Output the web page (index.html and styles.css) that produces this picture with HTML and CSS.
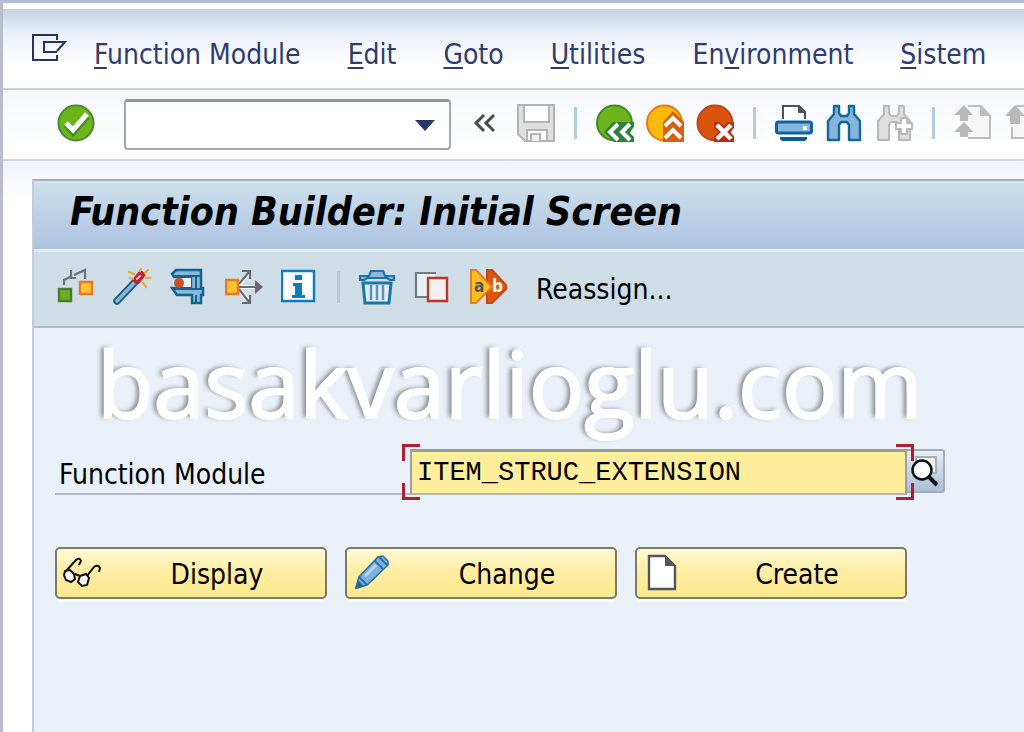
FILE: index.html
```html
<!DOCTYPE html>
<html lang="en">
<head>
<meta charset="utf-8">
<title>Function Builder: Initial Screen</title>
<link rel="stylesheet" href="styles.css">
</head>
<body>
<div class="window">
  <nav class="menubar">
    <button class="icon-button system-menu" aria-label="System menu">
      <svg class="icon" viewBox="0 0 38 38" fill="none" stroke="#26345f" stroke-width="2"><path d="M27 10V5H3v25h24v-5M27 21l8-9H14v10h13"/></svg>
    </button>
    <a class="menu" href="#"><u>F</u>unction Module</a>
    <a class="menu" href="#"><u>E</u>dit</a>
    <a class="menu" href="#"><u>G</u>oto</a>
    <a class="menu" href="#"><u>U</u>tilities</a>
    <a class="menu" href="#">En<u>v</u>ironment</a>
    <a class="menu" href="#"><u>S</u>istem</a>
  </nav>

  <div class="toolbar">
    <button class="icon-button" aria-label="Enter">
      <svg class="icon" viewBox="0 0 38 38"><circle cx="19" cy="19" r="17.5" fill="#6db41a" stroke="#468a35" stroke-width="2"/><path d="M9 20l7 8 14-16" fill="none" stroke="#3f8b20" stroke-width="7"/><path d="M9 19l7 7 14-16" fill="none" stroke="#fff" stroke-width="5"/></svg>
    </button>
    <div class="combo">
      <input class="combo-input" type="text" aria-label="Command field">
      <button class="combo-arrow" aria-label="Show command history"><svg class="arrow" viewBox="0 0 20 12"><path d="M0 1h20L10 12z" fill="#25386b"/></svg></button>
    </div>
    <button class="icon-button narrow" aria-label="Close command field">
      <svg class="icon-narrow" viewBox="0 0 22 38" fill="none" stroke="#4b4b4b" stroke-width="3"><path d="M11 11L3 19l8 8M21 11l-8 8 8 8"/></svg>
    </button>
    <button class="icon-button" aria-label="Save" disabled>
      <svg class="icon" viewBox="0 0 38 38" stroke="#b3b3b3" stroke-width="2"><path d="M1 1h36v36H8l-7-7z" fill="#dfdfdf"/><path d="M7 1h25v17H7zM10 37V26h20v11z" fill="#fff"/><path d="M14 37v-7h9v7" fill="#eee"/></svg>
    </button>
    <span class="separator"></span>
    <button class="icon-button" aria-label="Back">
      <svg class="icon" viewBox="0 0 38 38"><circle cx="18.500" cy="19" r="17.500" fill="#6db41a" stroke="#3f8b2c" stroke-width="2"/><path d="M17 18h21v5l-5 5 5 5v5H18L8 28z" fill="#2e8040"/><path d="M22 20l-8 8 8 8M34 20l-8 8 8 8" fill="none" stroke="#fff" stroke-width="4"/></svg>
    </button>
    <button class="icon-button" aria-label="Exit">
      <svg class="icon" viewBox="0 0 38 38"><circle cx="18.500" cy="19" r="17.500" fill="#fdba0c" stroke="#e8791a" stroke-width="2"/><path d="M27 7l11 11v20H17V18z" fill="#dd5d10"/><path d="M19 22l8-8 8 8M19 34l8-8 8 8" fill="none" stroke="#fff" stroke-width="4"/></svg>
    </button>
    <button class="icon-button" aria-label="Cancel">
      <svg class="icon" viewBox="0 0 38 38"><circle cx="19" cy="19" r="17.500" fill="#d9540f" stroke="#c0421d" stroke-width="2"/><path d="M18 18h5l5 4 4-4h6v6l-4 4 4 4v6H18v-6l5-4-5-4z" fill="#b72d16"/><path d="M21 21l14 14M35 21L21 35" stroke="#fff" stroke-width="4.500"/></svg>
    </button>
    <span class="separator"></span>
    <button class="icon-button" aria-label="Print">
      <svg class="icon" viewBox="0 0 38 38"><path d="M8 15V2h16l6 6v7" fill="#fff" stroke="#505050" stroke-width="2"/><path d="M23 2v7h7z" fill="#505050"/><rect x="1.500" y="18" width="35" height="11" rx="2" fill="#88b4db" stroke="#116596" stroke-width="3"/><path d="M28 22h4v4h-4z" fill="#fff"/><path d="M5 33h27v2l-2 2H7l-2-2z" fill="#075d94"/></svg>
    </button>
    <button class="icon-button" aria-label="Find">
      <svg class="icon" viewBox="0 0 38 38" fill="#86b4dc" stroke="#116a92" stroke-width="2.400" stroke-linejoin="round"><path d="M9 2h5v7l2 3h6l2-3V2h5v8l6 7v19H24V21l-2-3h-6l-2 3v15H3V17l6-7z"/></svg>
    </button>
    <button class="icon-button" aria-label="Find next" disabled>
      <svg class="icon" viewBox="0 0 38 38" fill="#dedede" stroke="#b8b8b8" stroke-width="2" stroke-linejoin="round"><path d="M9 2h5v7l2 3h6l2-3V2h5v8l6 7v19H24V21l-2-3h-6l-2 3v15H3V17l6-7z"/><path d="M26 14h6v5h5v6h-5v5h-6v-5h-5v-6h5z" fill="#fff"/></svg>
    </button>
    <span class="separator"></span>
    <button class="icon-button" aria-label="First page" disabled>
      <svg class="icon" viewBox="0 0 38 38"><path d="M14 2h13l9 10v22H14" fill="#f6f6f6" stroke="#bdbdbd" stroke-width="2"/><path d="M26 2v10h10z" fill="#bdbdbd"/><path d="M10 1l9 10h-5v6H6v-6H0zM10 18l9 10h-5v5H6v-5H0z" fill="#b9b9b9"/></svg>
    </button>
    <button class="icon-button" aria-label="Previous page" disabled>
      <svg class="icon" viewBox="0 0 38 38"><path d="M12 2h15l9 10v22H8V23" fill="#f6f6f6" stroke="#bdbdbd" stroke-width="2"/><path d="M11 1l10 11h-5v8H6v-8H1z" fill="#b9b9b9"/></svg>
    </button>
  </div>

  <main class="screen">
    <section class="panel">
      <h1 class="title">Function Builder: Initial Screen</h1>
      <div class="actions">
        <button class="icon-button" aria-label="Other object">
          <svg class="icon" viewBox="0 0 38 38"><path d="M7 17v-5l8-4M14 2v8h5M17 7l11-5v9" fill="none" stroke="#6a7076" stroke-width="2.200"/><path d="M2 21h12v12H2z" fill="#6eae24" stroke="#477b32" stroke-width="2.400"/><path d="M23 14h12v12H23z" fill="#fdc62c" stroke="#e8762b" stroke-width="2.400"/></svg>
        </button>
        <button class="icon-button" aria-label="Activate">
          <svg class="icon" viewBox="0 0 38 38" stroke-linecap="round"><path d="M4 33L24 12" stroke="#17618b" stroke-width="7.500"/><path d="M4 33L23 13" stroke="#8db6d6" stroke-width="3.500"/><path d="M24 12l4-5" stroke="#bf2434" stroke-width="8"/><path d="M24 11l3-3" stroke="#f6bfc0" stroke-width="2"/><path d="M16 4l5 2M28 1l-1 2M35 2l-3 3M33 10h5M30 15l3 4M17 10l3 1" stroke="#f0a52b" stroke-width="2.200"/></svg>
        </button>
        <button class="icon-button" aria-label="Check">
          <svg class="icon" viewBox="0 0 38 38"><path d="M7 2h25v18h2v7h-2v8h-9v-8H8l-5-7h19V9H5L3 6z" fill="#8bb8d6" stroke="#12648e" stroke-width="2.500"/><path d="M14 10h8v9h-8z" fill="#f2f6fa"/><path d="M5 8h26M5 21h28M27 9v11M27 27v8" fill="none" stroke="#12648e" stroke-width="2"/><circle cx="10" cy="15" r="5" fill="#cf4f22"/></svg>
        </button>
        <button class="icon-button" aria-label="Where-used list">
          <svg class="icon" viewBox="0 0 38 38"><path d="M13 18L24 5M13 20l11 13M13 19h17" fill="none" stroke="#fff" stroke-width="4"/><path d="M14 16L24 4M17 3h8v8M14 21l10 13M17 35h8v-8M14 19h18" fill="none" stroke="#666a70" stroke-width="2.200"/><path d="M30 12l8 7-8 7z" fill="#666a70"/><path d="M1 12h12v14H1z" fill="#fdc62c" stroke="#e8762b" stroke-width="2.400"/></svg>
        </button>
        <button class="icon-button" aria-label="Information">
          <svg class="icon" viewBox="0 0 38 38"><path d="M1 3h32v30H1z" fill="#fff" stroke="#087ec1" stroke-width="2.400"/><path d="M14 7h7v5h-7zM12 15h9v12h3v3H11v-3h3v-9h-2z" fill="#087ec1"/></svg>
        </button>
        <span class="separator muted"></span>
        <button class="icon-button" aria-label="Delete">
          <svg class="icon" viewBox="0 0 38 38"><path d="M5 15h28l-2 20H7z" fill="#e3edf5" stroke="#1d75a5" stroke-width="3"/><path d="M13 17v15M19 17v15M25 17v15" stroke="#5b92b7" stroke-width="2.500"/><path d="M2 12V8h9l2-5h12l2 5h9v4h-4l-3-2H9l-3 2z" fill="#8fb9d7" stroke="#1d75a5" stroke-width="2.200"/></svg>
        </button>
        <button class="icon-button" aria-label="Copy">
          <svg class="icon" viewBox="0 0 38 38"><path d="M22 5H2v24h11" fill="#eaf0f5" stroke="#737a82" stroke-width="2.200"/><path d="M14 10h19v23H14z" fill="#f2f2f2" stroke="#b93723" stroke-width="2.400"/></svg>
        </button>
        <button class="icon-button" aria-label="Rename">
          <svg class="icon" viewBox="0 0 38 38"><path d="M17 2h5l14 15v4L22 35h-5z" fill="#dc570d" stroke="#c1481e" stroke-width="2"/><path d="M1 2h5l16 17L6 35H1z" fill="#fdc01f" stroke="#e77929" stroke-width="2"/><text class="glyph" x="4" y="24" fill="#4f5552">a</text><text class="glyph" x="22" y="24" fill="#fff">b</text></svg>
        </button>
        <button class="text-button">Reassign...</button>
      </div>

      <form class="content">
        <p class="watermark">basakvarlioglu.com</p>
        <div class="field-row">
          <label class="field-label" for="module">Function Module</label>
          <div class="field">
            <input class="field-input" id="module" type="text" value="ITEM_STRUC_EXTENSION">
            <span class="focus left"></span>
            <span class="focus right"></span>
          </div>
          <button class="search-help" type="button" aria-label="Search help">
            <svg class="search-icon" viewBox="0 0 36 40"><path d="M9 6h20v16H9z" fill="#f5f7fa" stroke="#a7aeb9" stroke-width="2"/><path d="M21 25l9 9" stroke="#111" stroke-width="4"/><circle cx="15" cy="19" r="9.500" fill="#fff" stroke="#111" stroke-width="2.500"/></svg>
          </button>
        </div>
        <div class="buttons">
          <button class="push" type="button">
            <svg class="icon" viewBox="0 0 38 38" fill="none" stroke="#111" stroke-width="2"><path d="M3 17L13 6q4-3 5 1l-2 4M24 22l7-9q4-3 6 1l-1 4M12 20l5 2"/><path d="M2 17l5-1 4 4 1 5-4 3-5-2-2-5zM17 22l6-2 3 4-2 7-5 1-4-4z" fill="#fff"/></svg>
            <span class="push-text">Display</span>
          </button>
          <button class="push" type="button">
            <svg class="icon" viewBox="0 0 38 38" stroke="#2b719f" stroke-width="1.600"><path d="M3 34l3-11L25 3l5-1 5 5v4L14 31z" fill="#7fb1de"/><path d="M6 23l8 8M22 7l8 8M26 3l8 8" fill="none" stroke-width="2"/><path d="M3 34l2-7 5 5z" fill="#1d6189"/><path d="M12 22L23 11" stroke="#b5d3ef" stroke-width="3"/></svg>
            <span class="push-text">Change</span>
          </button>
          <button class="push" type="button">
            <svg class="icon" viewBox="0 0 38 38"><path d="M6 2h16l10 10v23H6z" fill="#fff" stroke="#555" stroke-width="2.400"/><path d="M22 2v10h10z" fill="#555"/></svg>
            <span class="push-text">Create</span>
          </button>
        </div>
      </form>
    </section>
  </main>
</div>
</body>
</html>
```
FILE: styles.css
```css
* {
  box-sizing: border-box;
}

body {
  margin: 0;
  font-family: "DejaVu Sans Condensed", "DejaVu Sans", sans-serif;
  font-size: 28px;
  line-height: 36px;
  background: #fff;
}

button,
input {
  margin: 0;
  padding: 0;
  border: 0;
  background: none;
  color: inherit;
  font: inherit;
}

.window {
  display: flex;
  flex-direction: column;
  min-height: 100vh;
  overflow: hidden;
  border-left: 3px solid #b9bccd;
  border-top: 3px solid #aebdd3;
}

.menubar {
  display: flex;
  align-items: center;
  gap: 47px;
  height: 87px;
  padding: 12px 0 0 27px;
  border-top: 6px solid #fff;
  border-bottom: 2px solid #cdd0d3;
  background: linear-gradient(#c4d1e2, #e9eef6 22px, #fff 56px);
  white-space: nowrap;
}

.menu {
  color: #2e3c70;
  text-decoration: none;
}

.menu u {
  text-decoration-thickness: 2px;
  text-underline-offset: 3px;
}

.icon-button {
  display: flex;
  flex: none;
}

.icon {
  display: block;
  flex: none;
  width: 38px;
  height: 38px;
}

.icon-narrow {
  display: block;
  width: 22px;
  height: 38px;
}

.system-menu {
  margin: 0 -21px 12px 0;
}

.toolbar {
  display: flex;
  align-items: center;
  gap: 12px;
  height: 71px;
  padding: 0 0 4px 54px;
  border-bottom: 2px solid #d2d4d7;
  background: linear-gradient(#f4f7fb, #fff 60px);
}

.combo {
  display: flex;
  flex: none;
  width: 327px;
  height: 51px;
  margin: 4px 10px 0 17px;
  border: 2px solid #a5a7a9;
  border-top: 3px solid #929496;
  border-radius: 4px;
  background: #fff;
}

.combo-input {
  flex: 1;
  min-width: 0;
}

.combo-arrow {
  padding: 0 14px;
}

.arrow {
  display: block;
  width: 20px;
  height: 12px;
}

.narrow {
  margin-right: 10px;
}

.separator {
  flex: none;
  width: 3px;
  height: 32px;
  margin: 0 7px;
  background: #b0cbe3;
}

.muted {
  margin: 0;
  background: #b7c8d7;
}

.screen {
  display: flex;
  flex: 1;
  padding: 18px 0 0 29px;
  background: linear-gradient(#f0f3fb, #fff 40px);
}

.panel {
  display: flex;
  flex: 1;
  flex-direction: column;
  border-top: 2px solid #a2afbe;
  border-left: 2px solid #c3cbd9;
  background: #eaf0f8;
}

.title {
  margin: 0;
  padding: 8px 36px 16px;
  border-top: 2px solid #d5e5f0;
  border-bottom: 3px solid #dcebf4;
  background: linear-gradient(#cddfeb, #adc3df);
  font-size: 39px;
  font-style: italic;
  font-weight: bold;
  line-height: 42px;
  white-space: nowrap;
}

.actions {
  display: flex;
  align-items: center;
  gap: 18px;
  height: 76px;
  padding: 0 0 4px 23px;
  border-bottom: 2px solid #adbdca;
  background: #cfdde7;
}

.glyph {
  font-size: 17px;
  font-weight: bold;
}

.text-button {
  margin: 6px 0 0 10px;
}

.content {
  flex: 1;
  padding: 0 21px;
}

.watermark {
  margin: 0;
  padding: 0 42px;
  color: #fff;
  font-family: "Open Sans", sans-serif;
  font-size: 92px;
  line-height: 110px;
  -webkit-text-stroke: 2px #fff;
  text-shadow: -4px -1px 4px #8e9196;
}

.field-row {
  display: flex;
  margin-top: 11px;
}

.field-label {
  flex: none;
  width: 355px;
  height: 46px;
  padding: 8px 4px 0;
  border-bottom: 2px solid #b3bac2;
}

.field {
  position: relative;
  flex: none;
  width: 497px;
  height: 46px;
}

.field-input {
  width: 100%;
  height: 100%;
  padding: 0 5px;
  border: 2px solid #9b9e9f;
  border-top-width: 3px;
  border-bottom-color: #b2b5b5;
  background: #feed9a;
  font-family: "Liberation Mono", monospace;
  font-size: 27px;
}

.focus::before,
.focus::after {
  content: "";
  position: absolute;
  width: 15px;
  height: 14px;
  border: 0 solid #ac2032;
}

.focus::before {
  top: -5px;
  border-top-width: 3px;
}

.focus::after {
  bottom: -5px;
  border-bottom-width: 3px;
}

.left::before,
.left::after {
  left: -8px;
  border-left-width: 3px;
}

.right::before,
.right::after {
  right: -7px;
  border-right-width: 3px;
}

.search-help {
  width: 38px;
  height: 44px;
  border: 2px solid #a4adba;
  border-left: 0;
  border-radius: 0 3px 3px 0;
  background: linear-gradient(#e8edf3, #aabfd9);
}

.search-icon {
  display: block;
  width: 36px;
  height: 40px;
}

.buttons {
  display: flex;
  gap: 18px;
  margin-top: 52px;
}

.push {
  display: flex;
  align-items: center;
  width: 272px;
  height: 52px;
  padding: 0 6px;
  border: 2px solid #7d796a;
  border-radius: 5px;
  background: linear-gradient(#fff9d6, #fdeea4 45%, #fde98f);
  box-shadow: 0 3px 1px #f6f9fb;
}

.push-text {
  flex: 1;
  padding: 4px 0 0 14px;
  text-align: center;
}
```
